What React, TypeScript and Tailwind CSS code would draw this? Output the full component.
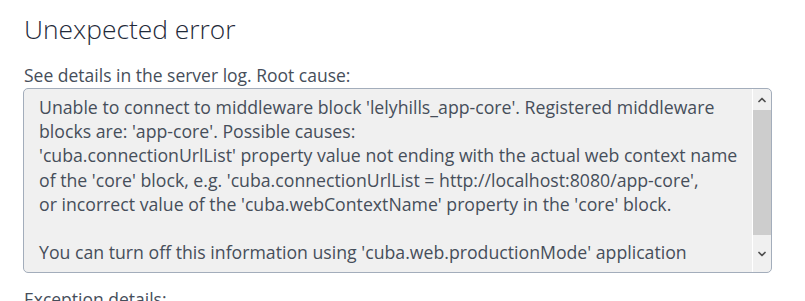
import { ChevronUp, ChevronDown } from 'lucide-react';

const lines = [
  "Unable to connect to middleware block 'lelyhills_app-core'. Registered middleware",
  "blocks are: 'app-core'. Possible causes:",
  "'cuba.connectionUrlList' property value not ending with the actual web context name",
  "of the 'core' block, e.g. 'cuba.connectionUrlList = http://localhost:8080/app-core',",
  "or incorrect value of the 'cuba.webContextName' property in the 'core' block.",
  '',
  "You can turn off this information using 'cuba.web.productionMode' application",
];

export default function App() {
  return (
    <div className="h-[301px] w-[805px] overflow-hidden bg-white font-['Open_Sans',sans-serif] text-[#464e5a]">
      <div className="px-6 pt-[11px]">
        <h1 className="text-[26.4px] font-light leading-[36px] text-[#1f2a3a]">Unexpected error</h1>
        <p className="mt-[16px] text-[17.5px] leading-[24px]">See details in the server log. Root cause:</p>
        <div className="mt-[1px] -ml-px flex h-[185px] w-[749px] overflow-hidden rounded-[5px] border border-[#a3adbb] bg-[#f0f0f0]">
          <div className="flex-1 overflow-hidden pl-[15px] pt-[6px] text-[17.7px] leading-[24.2px]">
            {lines.map((l, i) => (
              <div key={i} className="h-[24.2px] whitespace-pre">
                {l || ' '}
              </div>
            ))}
          </div>
          <div className="flex w-[19px] flex-col border-l border-white">
            <div className="flex h-[21px] items-center justify-center">
              <ChevronUp size={12} strokeWidth={3.5} className="text-[#505050]" />
            </div>
            <div className="h-[125px] bg-[#cdcdcd]" />
            <div className="flex flex-1 items-center justify-center">
              <ChevronDown size={12} strokeWidth={3.5} className="text-[#505050]" />
            </div>
          </div>
        </div>
        <p className="mt-[14px] text-[17.5px] leading-[24px]">Exception details:</p>
      </div>
    </div>
  );
}
